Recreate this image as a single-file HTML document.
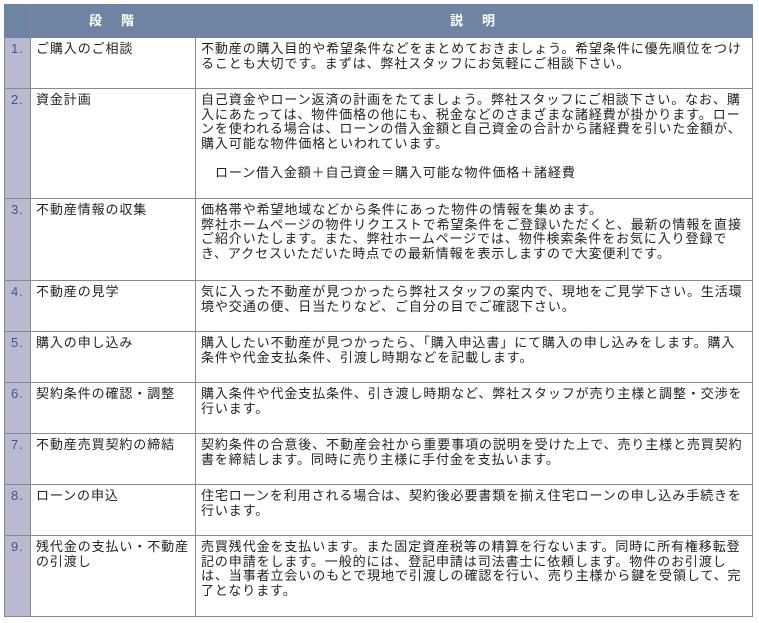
<!DOCTYPE html>
<html><head><meta charset="utf-8"><style>
body{margin:0;background:#fff;width:759px;height:623px;overflow:hidden;font-family:"Liberation Sans","Noto Sans CJK JP",sans-serif;}
table{position:absolute;left:4px;top:4px;border-collapse:collapse;width:749px;table-layout:fixed;}
td,th{border:1px solid #8a8a8a;vertical-align:top;padding:0;font-size:13px;line-height:14.5px;color:#222;letter-spacing:0.9px;}
th{background:#6f84a3;color:#fff;font-weight:bold;height:32px;vertical-align:middle;border-color:#6f84a3;letter-spacing:3px;}
th.n{border-right-color:#8a8a8a}
td.n{background:#b9b9cf;color:#3d5a8f;padding:4px 0 0 6px;}
td.s{padding:4px 0 0 5px;}
td.d{padding:4px 0 0 5px;}
</style></head><body>
<table>
<colgroup><col style="width:26px"><col style="width:165px"><col></colgroup>
<tr><th class="n"></th><th>段　階</th><th>説　明</th></tr>
<tr style="height:51px"><td class="n">1.</td><td class="s">ご購入のご相談</td><td class="d">不動産の購入目的や希望条件などをまとめておきましょう。希望条件に優先順位をつけ<br>ることも大切です。まずは、弊社スタッフにお気軽にご相談下さい。</td></tr>
<tr style="height:110px"><td class="n">2.</td><td class="s">資金計画</td><td class="d">自己資金やローン返済の計画をたてましょう。弊社スタッフにご相談下さい。なお、購<br>入にあたっては、物件価格の他にも、税金などのさまざまな諸経費が掛かります。ロー<br>ンを使われる場合は、ローンの借入金額と自己資金の合計から諸経費を引いた金額が、<br>購入可能な物件価格といわれています。<br><br><span style="padding-left:14px">ローン借入金額＋自己資金＝購入可能な物件価格＋諸経費</span></td></tr>
<tr style="height:82px"><td class="n">3.</td><td class="s">不動産情報の収集</td><td class="d">価格帯や希望地域などから条件にあった物件の情報を集めます。<br>弊社ホームページの物件リクエストで希望条件をご登録いただくと、最新の情報を直接<br>ご紹介いたします。また、弊社ホームページでは、物件検索条件をお気に入り登録で<br>き、アクセスいただいた時点での最新情報を表示しますので大変便利です。</td></tr>
<tr style="height:51px"><td class="n">4.</td><td class="s">不動産の見学</td><td class="d">気に入った不動産が見つかったら弊社スタッフの案内で、現地をご見学下さい。生活環<br>境や交通の便、日当たりなど、ご自分の目でご確認下さい。</td></tr>
<tr style="height:51px"><td class="n">5.</td><td class="s">購入の申し込み</td><td class="d">購入したい不動産が見つかったら、「購入申込書」にて購入の申し込みをします。購入<br>条件や代金支払条件、引渡し時期などを記載します。</td></tr>
<tr style="height:51px"><td class="n">6.</td><td class="s">契約条件の確認・調整</td><td class="d">購入条件や代金支払条件、引き渡し時期など、弊社スタッフが売り主様と調整・交渉を<br>行います。</td></tr>
<tr style="height:51px"><td class="n">7.</td><td class="s">不動産売買契約の締結</td><td class="d">契約条件の合意後、不動産会社から重要事項の説明を受けた上で、売り主様と売買契約<br>書を締結します。同時に売り主様に手付金を支払います。</td></tr>
<tr style="height:51px"><td class="n">8.</td><td class="s">ローンの申込</td><td class="d">住宅ローンを利用される場合は、契約後必要書類を揃え住宅ローンの申し込み手続きを<br>行います。</td></tr>
<tr style="height:81px"><td class="n">9.</td><td class="s">残代金の支払い・不動産<br>の引渡し</td><td class="d">売買残代金を支払います。また固定資産税等の精算を行ないます。同時に所有権移転登<br>記の申請をします。一般的には、登記申請は司法書士に依頼します。物件のお引渡し<br>は、当事者立会いのもとで現地で引渡しの確認を行い、売り主様から鍵を受領して、完<br>了となります。</td></tr>
</table>
</body></html>
